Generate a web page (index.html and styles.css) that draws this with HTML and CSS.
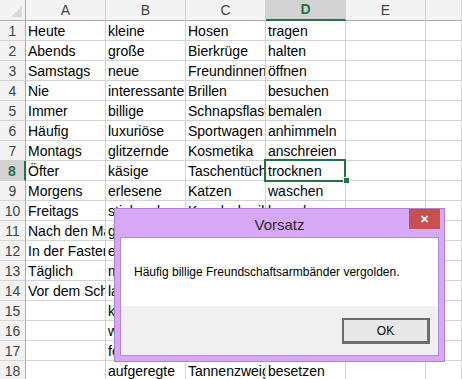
FILE: index.html
```html
<!DOCTYPE html>
<html lang="de">
<head>
  <meta charset="UTF-8" />
  <title>Vorsatz</title>
  <link rel="stylesheet" href="styles.css">
</head>
<body>
  <div class="sheet">
    <div class="grid">
      <div class="corner"><span class="dreieck"></span></div>
      <div class="colhead">A</div>
      <div class="colhead">B</div>
      <div class="colhead">C</div>
      <div class="colhead aktiv">D</div>
      <div class="colhead">E</div>
      <div class="colhead"></div>

      <div class="rowhead">1</div><div class="cell">Heute</div><div class="cell">kleine</div><div class="cell">Hosen</div><div class="cell">tragen</div><div class="cell"></div><div class="cell"></div>
      <div class="rowhead">2</div><div class="cell">Abends</div><div class="cell">große</div><div class="cell">Bierkrüge</div><div class="cell">halten</div><div class="cell"></div><div class="cell"></div>
      <div class="rowhead">3</div><div class="cell">Samstags</div><div class="cell">neue</div><div class="cell">Freundinnen</div><div class="cell">öffnen</div><div class="cell"></div><div class="cell"></div>
      <div class="rowhead">4</div><div class="cell">Nie</div><div class="cell">interessante</div><div class="cell">Brillen</div><div class="cell">besuchen</div><div class="cell"></div><div class="cell"></div>
      <div class="rowhead">5</div><div class="cell">Immer</div><div class="cell">billige</div><div class="cell">Schnapsflaschen</div><div class="cell">bemalen</div><div class="cell"></div><div class="cell"></div>
      <div class="rowhead">6</div><div class="cell">Häufig</div><div class="cell">luxuriöse</div><div class="cell">Sportwagen</div><div class="cell">anhimmeln</div><div class="cell"></div><div class="cell"></div>
      <div class="rowhead">7</div><div class="cell">Montags</div><div class="cell">glitzernde</div><div class="cell">Kosmetika</div><div class="cell">anschreien</div><div class="cell"></div><div class="cell"></div>
      <div class="rowhead aktiv">8</div><div class="cell">Öfter</div><div class="cell">käsige</div><div class="cell">Taschentücher</div><div class="cell auswahl">trocknen</div><div class="cell"></div><div class="cell"></div>
      <div class="rowhead">9</div><div class="cell">Morgens</div><div class="cell">erlesene</div><div class="cell">Katzen</div><div class="cell">waschen</div><div class="cell"></div><div class="cell"></div>
      <div class="rowhead">10</div><div class="cell">Freitags</div><div class="cell">stinkende</div><div class="cell">Kugelschreiber</div><div class="cell">bemalen</div><div class="cell"></div><div class="cell"></div>
      <div class="rowhead">11</div><div class="cell">Nach den Mahlzeiten</div><div class="cell">goldene</div><div class="cell">Teller</div><div class="cell">putzen</div><div class="cell"></div><div class="cell"></div>
      <div class="rowhead">12</div><div class="cell">In der Fastenzeit</div><div class="cell">edle</div><div class="cell">Uhren</div><div class="cell">polieren</div><div class="cell"></div><div class="cell"></div>
      <div class="rowhead">13</div><div class="cell">Täglich</div><div class="cell">matte</div><div class="cell">Spiegel</div><div class="cell">zählen</div><div class="cell"></div><div class="cell"></div>
      <div class="rowhead">14</div><div class="cell">Vor dem Schlafengehen</div><div class="cell">lange</div><div class="cell">Socken</div><div class="cell">bügeln</div><div class="cell"></div><div class="cell"></div>
      <div class="rowhead">15</div><div class="cell"></div><div class="cell">kurze</div><div class="cell">Röcke</div><div class="cell">nähen</div><div class="cell"></div><div class="cell"></div>
      <div class="rowhead">16</div><div class="cell"></div><div class="cell">wilde</div><div class="cell">Hunde</div><div class="cell">füttern</div><div class="cell"></div><div class="cell"></div>
      <div class="rowhead">17</div><div class="cell"></div><div class="cell">feine</div><div class="cell">Gläser</div><div class="cell">spülen</div><div class="cell"></div><div class="cell"></div>
      <div class="rowhead">18</div><div class="cell"></div><div class="cell">aufgeregte</div><div class="cell">Tannenzweige</div><div class="cell">besetzen</div><div class="cell"></div><div class="cell"></div>
    </div>

    <div class="dialog">
      <div class="titel">
        <span class="titeltext">Vorsatz</span>
        <span class="schliessen">&#x2715;</span>
      </div>
      <div class="inhalt">
        <div class="nachricht">Häufig billige Freundschaftsarmbänder vergolden.</div>
        <div class="fuss">
          <button class="ok">OK</button>
        </div>
      </div>
    </div>
  </div>
</body>
</html>
```

FILE: styles.css
```css
body {
  margin: 0;
  background: #ffffff;
  font-family: "Liberation Sans", Arial, sans-serif;
  overflow: hidden;
}
.sheet {
  position: relative;
  width: 462px;
  height: 379px;
  overflow: hidden;
}
.grid {
  display: grid;
  grid-template-columns: 26px repeat(5, 80px) 1fr;
  grid-template-rows: 21px;
  grid-auto-rows: 20px;
}
.grid > div {
  box-sizing: border-box;
  border-right: 1px solid #d4d4d4;
  border-bottom: 1px solid #d4d4d4;
  overflow: hidden;
  white-space: nowrap;
}
.corner {
  position: relative;
  background: #f3f3f3;
  border-bottom-color: #ababab !important;
  border-right-color: #ababab !important;
}
.dreieck {
  position: absolute;
  right: 3px;
  bottom: 3px;
  width: 0;
  height: 0;
  border-left: 11px solid transparent;
  border-bottom: 11px solid #dadada;
}
.colhead {
  background: #f3f3f3;
  color: #444;
  font-size: 14px;
  line-height: 20px;
  text-align: center;
  border-bottom-color: #ababab !important;
}
.colhead.aktiv {
  background: #d2d2d2;
  color: #217346;
  font-weight: bold;
  border-bottom: 2px solid #217346 !important;
  line-height: 19px;
}
.rowhead {
  background: #f3f3f3;
  color: #444;
  font-size: 14px;
  line-height: 20px;
  text-align: center;
  border-right-color: #ababab !important;
}
.rowhead.aktiv {
  background: #d2d2d2;
  color: #217346;
  font-weight: bold;
  border-right: 2px solid #217346 !important;
}
.cell {
  font-size: 14px;
  line-height: 19px;
  padding: 1px 0 0 2px;
  color: #000;
}
.grid > .auswahl {
  position: relative;
  overflow: visible;
}
.auswahl::after {
  content: '';
  position: absolute;
  left: -2px;
  top: -2px;
  width: 82px;
  height: 23px;
  box-sizing: border-box;
  border: 2px solid #217346;
}
.auswahl::before {
  content: '';
  position: absolute;
  left: 77px;
  top: 16px;
  width: 5px;
  height: 5px;
  background: #217346;
  border: 1px solid #fff;
  z-index: 2;
}

.dialog {
  position: absolute;
  left: 114px;
  top: 208px;
  width: 331px;
  height: 154px;
  box-sizing: border-box;
  background: #d7a8f6;
  border: 1px solid #ad82cc;
  padding: 0 5px 5px 5px;
  display: flex;
  flex-direction: column;
}
.titel {
  height: 28px;
  display: flex;
  align-items: center;
  justify-content: center;
  position: relative;
}
.titeltext {
  font-size: 15px;
  color: #2b2b2b;
  margin-top: 2px;
}
.schliessen {
  position: absolute;
  right: -1px;
  top: 0;
  width: 31px;
  height: 20px;
  background: #c75050;
  color: #fff;
  font-size: 11px;
  font-weight: bold;
  line-height: 20px;
  text-align: center;
}
.inhalt {
  flex: 1;
  border: 1px solid #b38ad6;
  display: flex;
  flex-direction: column;
}
.nachricht {
  height: 68px;
  background: #fff;
  padding-left: 13px;
  font-size: 12px;
  line-height: 68px;
  color: #000;
}
.fuss {
  flex: 1;
  background: #f0f0f0;
  display: flex;
  justify-content: flex-end;
  align-items: flex-start;
  padding: 12px 8px 0 0;
}
.ok {
  width: 88px;
  height: 26px;
  box-sizing: border-box;
  background: #e8e8e8;
  border: 2px solid #6d6d6d;
  border-right-width: 3px;
  border-bottom-width: 3px;
  font-family: "Liberation Sans", Arial, sans-serif;
  font-size: 12px;
  color: #000;
  padding: 0;
}
```
